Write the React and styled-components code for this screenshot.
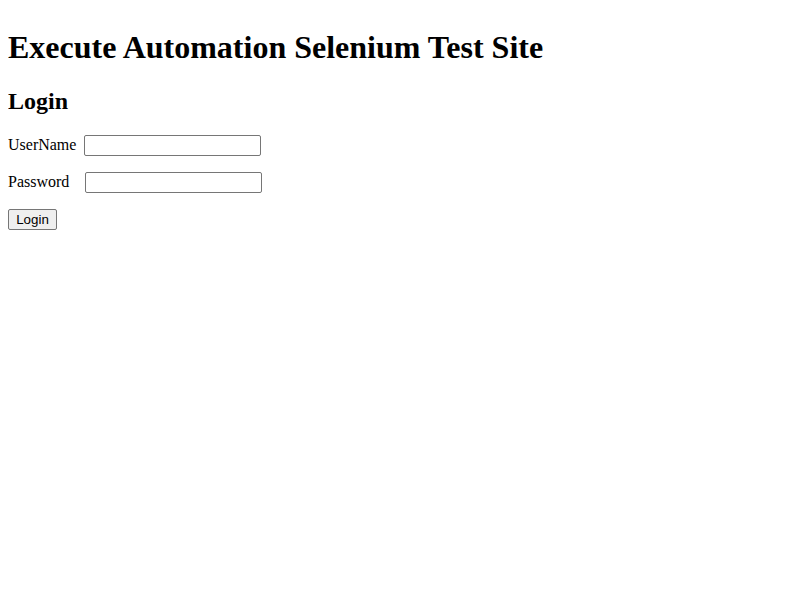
import styled, { createGlobalStyle } from "styled-components";

const Global = createGlobalStyle`
  body {
    margin: 8px;
    font-family: "Liberation Serif", "Times New Roman", serif;
    font-size: 16px;
    color: #000;
    background: #fff;
  }
`;

const Title = styled.h1`
  font-size: 32px;
  font-weight: bold;
  margin: 21.44px 0;
`;

const SubTitle = styled.h2`
  font-size: 24px;
  font-weight: bold;
  margin: 19.92px 0;
`;

const Row = styled.p`
  margin: 16px 0;
`;

const Label = styled.label`
  display: inline-block;
  margin-right: ${(p) => p.gap}px;
`;

const TextInput = styled.input`
  font-family: "Liberation Sans", Arial, sans-serif;
  font-size: 13.333px;
  width: 177px;
  height: 21px;
  box-sizing: border-box;
  padding: 1px 2px;
  border: 1px solid #767676;
  border-radius: 2px;
  vertical-align: baseline;
`;

const Button = styled.button`
  font-family: "Liberation Sans", Arial, sans-serif;
  font-size: 13.333px;
  width: 49px;
  height: 21px;
  padding: 1px 6px;
  border: 1px solid #767676;
  border-radius: 2px;
  background: #efefef;
  color: #000;
`;

const App = () => {
  return (
    <>
      <Global />
      <Title>Execute Automation Selenium Test Site</Title>
      <SubTitle>Login</SubTitle>
      <form onSubmit={(e) => e.preventDefault()}>
        <Row>
          <Label gap={8}>UserName</Label>
          <TextInput type="text" name="UserName" />
        </Row>
        <Row>
          <Label gap={16}>Password</Label>
          <TextInput type="password" name="Password" />
        </Row>
        <Row>
          <Button type="submit">Login</Button>
        </Row>
      </form>
    </>
  );
};

export default App;
